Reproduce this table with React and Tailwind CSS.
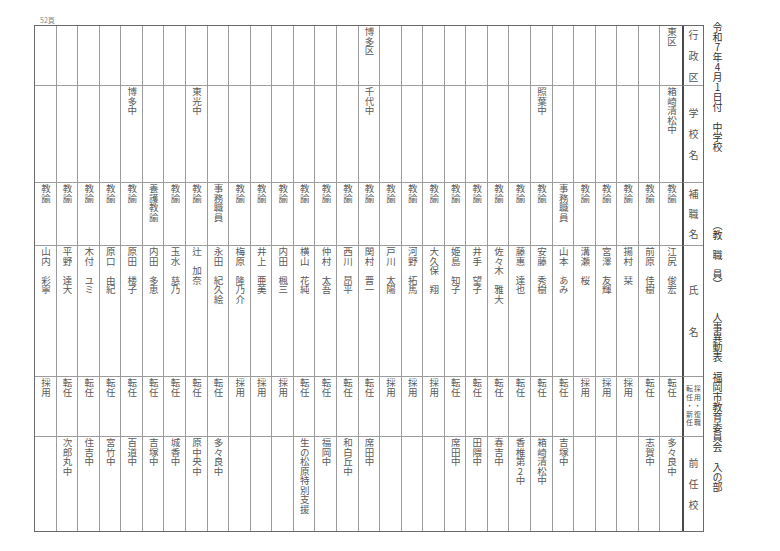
import clsx from "clsx";

// 右の列から順に（画像の右端が先頭）
const staff = [
  { ku: "東区", school: "箱崎清松中", post: "教諭", name: "江尻　俊宏", type: "転任", prev: "多々良中" },
  { post: "教諭", name: "前原　佳樹", type: "転任", prev: "志賀中" },
  { post: "教諭", name: "揚村　栞", type: "採用" },
  { post: "教諭", name: "宮澤　友輝", type: "採用" },
  { post: "教諭", name: "溝瀬　桜", type: "採用" },
  { post: "事務職員", name: "山本　あみ", type: "転任", prev: "吉塚中" },
  { school: "照葉中", post: "教諭", name: "安藤　秀樹", type: "転任", prev: "箱崎清松中" },
  { post: "教諭", name: "藤惠　達也", type: "転任", prev: "香椎第2中" },
  { post: "教諭", name: "佐々木　雅大", type: "転任", prev: "春吉中" },
  { post: "教諭", name: "井手　望子", type: "転任", prev: "田隈中" },
  { post: "教諭", name: "姫島　知子", type: "転任", prev: "席田中" },
  { post: "教諭", name: "大久保　翔", type: "採用" },
  { post: "教諭", name: "河野　拓馬", type: "採用" },
  { post: "教諭", name: "戸川　太陽", type: "採用" },
  { ku: "博多区", school: "千代中", post: "教諭", name: "関村　晋一", type: "転任", prev: "席田中" },
  { post: "教諭", name: "西川　昂平", type: "転任", prev: "和白丘中" },
  { post: "教諭", name: "仲村　太吾", type: "転任", prev: "福岡中" },
  { post: "教諭", name: "横山　花純", type: "転任", prev: "生の松原特別支援" },
  { post: "教諭", name: "内田　楓三", type: "採用" },
  { post: "教諭", name: "井上　亜美", type: "採用" },
  { post: "教諭", name: "梅原　隆乃介", type: "採用" },
  { post: "事務職員", name: "永田　紀久絵", type: "転任", prev: "多々良中" },
  { school: "東光中", post: "教諭", name: "辻　加奈", type: "転任", prev: "原中央中" },
  { post: "教諭", name: "玉水　慈乃", type: "転任", prev: "城香中" },
  { post: "養護教諭", name: "内田　多恵", type: "転任", prev: "吉塚中" },
  { school: "博多中", post: "教諭", name: "原田　楼子", type: "転任", prev: "百道中" },
  { post: "教諭", name: "原口　由紀", type: "転任", prev: "宮竹中" },
  { post: "教諭", name: "木付　ユミ", type: "転任", prev: "住吉中" },
  { post: "教諭", name: "平野　達大", type: "転任", prev: "次郎丸中" },
  { post: "教諭", name: "山内　彩寧", type: "採用" },
];

const Vert = ({ children, className }) => (
  <span
    className={clsx(
      "[writing-mode:vertical-rl] [text-orientation:upright] leading-none whitespace-nowrap",
      className
    )}
  >
    {children}
  </span>
);

const Cell = ({ children, edge, bottom }) => (
  <div
    className={clsx(
      "flex justify-center pt-[1px] border-[#9c9c9c] overflow-hidden",
      !edge && "border-r",
      !bottom && "border-b"
    )}
  >
    {children && <Vert className="text-[9.5px] text-[#5a5a5a]">{children}</Vert>}
  </div>
);

const HeadCell = ({ chars, gap, bottom }) => (
  <div
    className={clsx(
      "flex flex-col items-center justify-center border-l-2 border-l-[#4a4a4a] border-[#9c9c9c] text-[10px] leading-none text-[#555]",
      gap,
      !bottom && "border-b"
    )}
  >
    {chars.split("").map((c, i) => (
      <span key={i}>{c}</span>
    ))}
  </div>
);

export default function App() {
  const cols = [...staff].reverse();

  return (
    <div className="w-[780px] h-[551px] bg-white flex pt-[16px] pl-[34px] font-['Noto_Sans_CJK_JP','Noto_Sans',sans-serif]">
      <div className="flex flex-col">
        <div className="h-[9px] pl-[6px] text-[7px] leading-[9px] text-[#8a8a8a]">52頁</div>
        <div className="w-[670px] border border-[#6a6a6a] grid grid-flow-col grid-cols-[repeat(30,minmax(0,1fr))_21px] grid-rows-[60px_97px_63px_131px_60px_94px]">
          {cols.map((s, i) => {
            const edge = i === cols.length - 1;
            return [
              <Cell key={`${i}a`} edge={edge}>{s.ku}</Cell>,
              <Cell key={`${i}b`} edge={edge}>{s.school}</Cell>,
              <Cell key={`${i}c`} edge={edge}>{s.post}</Cell>,
              <Cell key={`${i}d`} edge={edge}>{s.name}</Cell>,
              <Cell key={`${i}e`} edge={edge}>{s.type}</Cell>,
              <Cell key={`${i}f`} edge={edge} bottom>{s.prev}</Cell>,
            ];
          })}
          <HeadCell chars="行政区" gap="gap-[11px]" />
          <HeadCell chars="学校名" gap="gap-[11px]" />
          <HeadCell chars="補職名" gap="gap-[10px]" />
          <HeadCell chars="氏名" gap="gap-[32px]" />
          <div className="flex items-center justify-center border-l-2 border-l-[#4a4a4a] border-b border-[#9c9c9c]">
            <span className="[writing-mode:vertical-rl] text-[7px] leading-[8px] tracking-[1.5px] text-[#555] whitespace-nowrap">
              採用・復職
              <br />
              転任・新任
            </span>
          </div>
          <HeadCell chars="前任校" gap="gap-[11px]" bottom />
        </div>
      </div>

      <div className="ml-[5px] w-[16px] pt-[6px] flex flex-col items-center text-[10px] leading-none text-[#333]">
        <Vert>令和7年4月1日付　中学校</Vert>
        <div className="mt-[68px] flex flex-col items-center">
          <span className="[writing-mode:vertical-rl] leading-none">（教</span>
          <span className="[writing-mode:vertical-rl] leading-none mt-[9.5px]">職</span>
          <span className="[writing-mode:vertical-rl] leading-none mt-[9.5px]">員）</span>
        </div>
        <span className="mt-[23px] [writing-mode:vertical-rl] leading-none whitespace-nowrap">
          人事異動表　福岡市教育委員会　入の部
        </span>
      </div>
    </div>
  );
}
